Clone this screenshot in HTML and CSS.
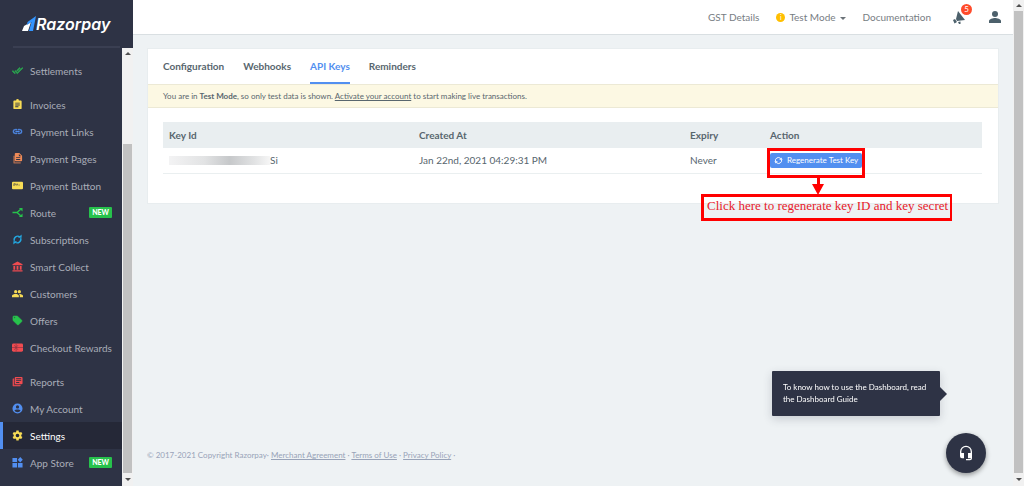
FILE: index.html
```html
<!DOCTYPE html>
<html lang="en">
<head>
<meta charset="utf-8">
<title>Razorpay Dashboard - API Keys</title>
<meta name="viewport" content="width=device-width, initial-scale=1">
<link rel="stylesheet" href="styles.css">
</head>
<body>
<div class="app">
  <aside class="sidebar">
    <a class="brand" href="#">
      <svg class="brand-mark" viewBox="0 0 14 16" aria-hidden="true"><path fill="#fff" d="M2 10 9 6 6 15H0z"/><path fill="#3395ff" d="M14 0 5.500 6 5 9l4.500-3L7 15h4z"/></svg>
      <span>Razorpay</span>
    </a>
    <div class="sidebar-body">
      <nav class="menu">
        <div class="menu-group">
          <a class="item" href="#"><svg class="icon green-dark" viewBox="0 0 24 24"><path d="M18 7l-1.4-1.4-6.4 6.3 1.500 1.500L18 7zm4.200-1.400L11.700 16.200 7.500 12l-1.400 1.400 5.600 5.600 12-12-1.500-1.400zM.4 13.400 6 19l1.400-1.400L1.800 12 .4 13.400z" stroke="currentColor" stroke-width="1.500"/></svg><span>Settlements</span></a>
        </div>
        <div class="menu-group">
          <a class="item" href="#"><svg class="icon yellow" viewBox="0 0 24 24"><path fill-rule="evenodd" d="M19 3h-4a3 3 0 0 0-6 0H5a2 2 0 0 0-2 2v15a2 2 0 0 0 2 2h14a2 2 0 0 0 2-2V5a2 2 0 0 0-2-2zM7 8h10v2H7zm0 4h10v2H7zm0 4h7v2H7z"/></svg><span>Invoices</span></a>
          <a class="item" href="#"><svg class="icon blue" viewBox="0 0 24 24"><path d="M3.900 12c0-1.700 1.400-3.100 3.100-3.100h4V7H7a5 5 0 0 0 0 10h4v-1.900H7A3.100 3.100 0 0 1 3.900 12zM8 13h8v-2H8zm9-6h-4v1.900h4a3.100 3.100 0 0 1 0 6.200h-4V17h4a5 5 0 0 0 0-10z" stroke="currentColor"/></svg><span>Payment Links</span></a>
          <a class="item" href="#"><svg class="icon orange" viewBox="0 0 24 24"><path opacity=".65" d="M3 6h3v14h13v3H5a2 2 0 0 1-2-2z"/><path fill-rule="evenodd" d="M8 0h8l6 6v10a2 2 0 0 1-2 2H8a2 2 0 0 1-2-2V2a2 2 0 0 1 2-2zm7 2v5h5zM9 9v2h9V9zm0 4v2h9v-2z"/></svg><span>Payment Pages</span></a>
          <a class="item" href="#"><svg class="icon yellow" viewBox="0 0 24 24"><rect y="4" width="24" height="16" rx="2"/><path d="M4 13V8h3v3H4m5 0V8m0 3h3V8m2 3h3" fill="none" stroke="#5d5a4a" stroke-width="1.500"/></svg><span>Payment Button</span></a>
          <a class="item" href="#"><svg class="icon green" viewBox="0 0 24 24"><path d="M1 12h10l8-7M11 12l8 7" fill="none" stroke="currentColor" stroke-width="3"/><path d="M15 2h8v8zM15 22h8v-8z"/></svg><span>Route</span><b class="new">NEW</b></a>
          <a class="item" href="#"><svg class="icon cyan" viewBox="0 0 24 24"><path d="M5 15a8 8 0 0 1 12-9M19 9a8 8 0 0 1-12 9" fill="none" stroke="currentColor" stroke-width="3"/><path d="M13 8h8V1zM11 16H3v7z"/></svg><span>Subscriptions</span></a>
          <a class="item" href="#"><svg class="icon red" viewBox="0 0 24 24"><path d="M12 1 1 7v2h22V7zM3 11h4v8H3zm7 0h4v8h-4zm7 0h4v8h-4zM1 20h22v3H1z"/></svg><span>Smart Collect</span></a>
          <a class="item" href="#"><svg class="icon yellow" viewBox="0 0 24 24"><circle cx="8" cy="8" r="3.500"/><circle cx="16" cy="8" r="3.500"/><path d="M0 20v-3c0-3 5-4 8-4s7 1 7 4v3zM17 20v-3c0-2-1-3-2-4 4 0 9 1 9 4v3z"/></svg><span>Customers</span></a>
          <a class="item" href="#"><svg class="icon green" viewBox="0 0 24 24"><path fill-rule="evenodd" d="M21.400 11.600l-9-9A2 2 0 0 0 11 2H4a2 2 0 0 0-2 2v7c0 .6.200 1 .6 1.400l9 9a2 2 0 0 0 2.800 0l7-7a2 2 0 0 0 0-2.800zM5.500 7a1.500 1.500 0 1 1 0-3 1.500 1.500 0 0 1 0 3z" stroke="currentColor" stroke-width="1"/></svg><span>Offers</span></a>
          <a class="item" href="#"><svg class="icon red" viewBox="0 0 24 24"><rect y="3" width="24" height="18" rx="3"/><path d="M0 12h24M9 3v18M5 7l8 10M13 7 5 17" stroke="#8f3442" stroke-width="1.500"/></svg><span>Checkout Rewards</span></a>
        </div>
        <div class="menu-group">
          <a class="item" href="#"><svg class="icon red" viewBox="0 0 24 24"><path d="M2 6v16h16v-2H4V6z" stroke="currentColor"/><path fill-rule="evenodd" d="M8 2h13a2 2 0 0 1 2 2v12a2 2 0 0 1-2 2H8a2 2 0 0 1-2-2V4a2 2 0 0 1 2-2zm1 3v2h11V5zm0 4v2h11V9zm0 4v2h7v-2z"/></svg><span>Reports</span></a>
          <a class="item" href="#"><svg class="icon blue" viewBox="0 0 24 24"><path fill-rule="evenodd" d="M12 1a11 11 0 1 0 0 22 11 11 0 0 0 0-22zm0 4a3.500 3.500 0 1 1 0 7 3.500 3.500 0 0 1 0-7zm0 15c-3 0-5-1-6.500-3.500C6 14.500 10 14 12 14s6 .5 6.500 2.500C17 19 15 20 12 20z"/></svg><span>My Account</span></a>
          <a class="item active" href="#" aria-current="page"><svg class="icon yellow" viewBox="0 0 24 24"><path fill-rule="evenodd" d="M9.500 1h5l.5 3.200 2 1.200 3.200-1.200 2.500 4.300-2.500 2v3l2.500 2-2.500 4.300-3.200-1.200-2 1.200-.5 3.200h-5L9 19.800l-2-1.200-3.200 1.200-2.500-4.300 2.500-2v-3l-2.500-2 2.500-4.300L7 5.400l2-1.200zM12 8a4 4 0 1 0 0 8 4 4 0 0 0 0-8z"/></svg><span>Settings</span></a>
          <a class="item" href="#"><svg class="icon blue" viewBox="0 0 24 24"><path d="M1 2h10v9H1zM1 13h10v10H1zM13 13h10v10H13zM18 0l5.500 6L18 12l-5.500-6z"/></svg><span>App Store</span><b class="new">NEW</b></a>
        </div>
      </nav>
      <div class="scroll" aria-hidden="true"><i class="arrow up"></i><i class="thumb menu-thumb"></i><i class="arrow down"></i></div>
    </div>
  </aside>

  <div class="main">
    <header class="topbar">
      <a href="#">GST Details</a>
      <button class="mode" type="button"><i class="info">i</i>Test Mode<i class="caret"></i></button>
      <a href="#">Documentation</a>
      <button class="bell" type="button" aria-label="Announcements">
        <svg viewBox="0 0 14 14"><path d="M6 1 13 10 5 11 4 9zM1 10l2-1 2 3-2.500 1.500zM6 12l2.500-.5V14H7z"/></svg>
        <span class="count">5</span>
      </button>
      <button class="user" type="button" aria-label="Account"><svg viewBox="0 0 12 12"><circle cx="6" cy="3" r="3"/><path d="M0 12v-2c0-2 4-3 6-3s6 1 6 3v2z"/></svg></button>
    </header>

    <main class="content">
      <section class="card">
        <nav class="tabs">
          <a href="#">Configuration</a>
          <a href="#">Webhooks</a>
          <a class="current" href="#" aria-current="page">API Keys</a>
          <a href="#">Reminders</a>
        </nav>
        <p class="notice">You are in <b>Test Mode</b>, so only test data is shown. <a href="#">Activate your account</a> to start making live transactions.</p>
        <div class="table-wrap">
          <table class="keys">
            <thead><tr><th class="col-key">Key Id</th><th class="col-date">Created At</th><th class="col-expiry">Expiry</th><th>Action</th></tr></thead>
            <tbody>
              <tr>
                <td><span class="key"><i class="redacted"></i>Si</span></td>
                <td>Jan 22nd, 2021 04:29:31 PM</td>
                <td>Never</td>
                <td>
                  <div class="action">
                    <button class="regenerate" type="button"><svg viewBox="0 0 24 24"><path d="M4 14a8 8 0 0 1 13-8M20 10a8 8 0 0 1-13 8" fill="none" stroke="#fff" stroke-width="2.500"/><path fill="#fff" d="M14 10h9l-4-6zM10 14H1l4 6z"/></svg>Regenerate Test Key</button>
                    <div class="highlight"></div>
                    <svg class="pointer" viewBox="0 0 12 18" aria-hidden="true"><path fill="#f00" d="M5 0h3v7h4L6 18 0 7h5z"/></svg>
                    <div class="callout">Click here to regenerate key ID and key secret</div>
                  </div>
                </td>
              </tr>
            </tbody>
          </table>
        </div>
      </section>
      <footer class="footer">© 2017-2021 Copyright Razorpay· <a href="#">Merchant Agreement</a> · <a href="#">Terms of Use</a> · <a href="#">Privacy Policy</a> ·</footer>
    </main>
  </div>
  <div class="scroll" aria-hidden="true"><i class="arrow up"></i><i class="thumb page-thumb"></i><i class="arrow down"></i></div>
</div>

<div class="guide">To know how to use the Dashboard, read the Dashboard Guide</div>
<button class="support" type="button" aria-label="Support"><svg viewBox="0 0 24 24"><path d="M12 1a9 9 0 0 0-9 9v7a3 3 0 0 0 3 3h3v-8H5v-2a7 7 0 0 1 14 0v2h-4v8h4v1h-7v2h6a3 3 0 0 0 3-3V10a9 9 0 0 0-9-9z"/></svg></button>
</body>
</html>
```

FILE: styles.css
```css
* { box-sizing: border-box; }

body {
  margin: 0;
  font: 10px/16px Lato, "Open Sans", sans-serif;
  color: #58666e;
  background: #eef2f4;
}

a { color: inherit; text-decoration: none; }

button {
  margin: 0;
  padding: 0;
  border: 0;
  background: none;
  color: inherit;
  font: inherit;
  cursor: pointer;
}

svg { display: block; flex: none; fill: currentColor; }

.app { display: flex; height: 100vh; }

/* Sidebar */
.sidebar {
  display: flex;
  flex-direction: column;
  width: 133px;
  flex: none;
  background: #2e3345;
}

.brand {
  display: flex;
  align-items: center;
  height: 48px;
  flex: none;
  margin: 0 13px;
  padding: 2px 0 0 9px;
  border-bottom: 2px solid #3a3f52;
  color: #fff;
  font: italic 600 16px/24px Inter, Lato, sans-serif;
}

.brand-mark { width: 14px; height: 16px; }

.sidebar-body { display: flex; flex: 1; min-height: 0; }

.menu { flex: 1; padding-top: 9px; overflow: hidden; }

.menu-group { margin-bottom: 7px; }

.item {
  display: flex;
  align-items: center;
  gap: 7px;
  height: 27px;
  padding: 0 10px 0 9px;
  border-left: 3px solid transparent;
  color: #a9adb8;
  white-space: nowrap;
}

.item.active { background: #252837; border-left-color: #528ff0; color: #fff; }

.icon { width: 11px; height: 11px; }
.yellow { color: #f7dc56; }
.green { color: #27c24c; }
.green-dark { color: #2aa84f; }
.blue { color: #528ff0; }
.cyan { color: #23a7e0; }
.orange { color: #ee8a57; }
.red { color: #f04b50; }

.new {
  margin-left: auto;
  padding: 0 3px;
  border-radius: 1px;
  background: #27c24c;
  color: #fff;
  font-size: 7px;
  font-weight: 900;
  line-height: 11px;
}

/* Scrollbars */
.scroll {
  display: flex;
  flex-direction: column;
  align-items: center;
  width: 11px;
  flex: none;
  background: #f1f1f1;
}

.arrow { border: 3px solid transparent; }
.up { margin: 1px 0 4px; border-bottom-color: #505050; }
.down { margin: 5px 0 2px; border-top-color: #505050; }
.thumb { flex: 1; width: 9px; background: #c1c1c1; }
.menu-thumb { margin-top: 85px; }

/* Top bar */
.main { display: flex; flex: 1; flex-direction: column; min-width: 0; }

.topbar {
  display: flex;
  align-items: center;
  justify-content: flex-end;
  height: 35px;
  flex: none;
  padding-right: 12px;
  border-bottom: 1px solid #d9dfe2;
  background: #fff;
  color: #777d83;
}

.mode { display: flex; align-items: center; margin: 0 17px; }

.info {
  width: 9px;
  height: 9px;
  margin-right: 4px;
  border-radius: 50%;
  background: #ffbf00;
  color: #fff;
  font-size: 7px;
  font-style: normal;
  line-height: 9px;
}

.caret {
  margin: 2px 0 0 4px;
  border: 3px solid transparent;
  border-top-color: #6b7278;
  border-bottom: 0;
}

.bell { position: relative; margin: 0 23px 0 21px; color: #4c606b; }
.bell svg { width: 14px; height: 14px; }

.count {
  position: absolute;
  top: -6px;
  right: -6px;
  width: 11px;
  border-radius: 50%;
  background: #ff4b2b;
  color: #fff;
  font-size: 8px;
  line-height: 11px;
}

.user { color: #4c606b; }
.user svg { width: 12px; height: 12px; }

/* Content */
.content { display: flex; flex: 1; flex-direction: column; padding: 13px 14px 23px; }

.card { padding-bottom: 29px; border: 1px solid #e8edef; background: #fff; }

.tabs { display: flex; gap: 19px; padding: 0 15px; font-weight: 700; }
.tabs a { padding: 9px 0 8px; border-bottom: 2px solid transparent; }
.tabs .current { color: #528ff0; border-color: #528ff0; }

.notice {
  margin: 0;
  padding: 3px 15px;
  border: solid #ece9d5;
  border-width: 1px 0;
  background: #fcf8e3;
  font-size: 8px;
  line-height: 16px;
}

.notice a, .footer a { text-decoration: underline; }

.table-wrap { padding: 14px 16px 0 15px; }

.keys { width: 100%; border-collapse: collapse; table-layout: fixed; }
.keys th { padding: 5px 6px; background: #e9eef0; font-weight: 700; text-align: left; }
.keys td { padding: 4px 6px 5px; border-bottom: 1px solid #eaeff0; }
.col-key { width: 250px; }
.col-date { width: 271px; }
.col-expiry { width: 80px; }

.key { display: flex; align-items: center; }

.redacted {
  width: 101px;
  height: 9px;
  background: linear-gradient(90deg, #f3f3f4, #e2e3e4 35%, #c6c8ca 60%, #e2e3e4 85%, #f6f6f6);
}

.action { position: relative; }

.regenerate {
  display: flex;
  align-items: center;
  gap: 4px;
  height: 15px;
  padding: 0 4px;
  border-radius: 2px;
  background: #528ff0;
  color: #fff;
  font-size: 8px;
  white-space: nowrap;
}

.regenerate svg { width: 9px; height: 9px; }

/* Annotation laid over the table */
.highlight {
  position: absolute;
  top: -5px;
  left: -3px;
  width: 98px;
  height: 30px;
  border: 3px solid #f00;
}

.pointer { position: absolute; top: 24px; left: 42px; width: 12px; height: 18px; }

.callout {
  position: absolute;
  top: 41px;
  left: -69px;
  padding: 1px 2px 4px 3px;
  border: 3px solid #f00;
  border-width: 3px 2px 3px 3px;
  color: #e8202a;
  font: 13px/16px "Liberation Serif", serif;
  white-space: nowrap;
}

.footer { margin-top: auto; color: #98a3b8; font-size: 8px; }

/* Floating help */
.guide {
  position: fixed;
  right: 84px;
  bottom: 70px;
  width: 168px;
  padding: 10px 10px 11px 11px;
  border-radius: 1px;
  background: #2e3345;
  box-shadow: 0 3px 10px rgba(46, 51, 69, 0.2);
  color: #fff;
  font-size: 8px;
  line-height: 12px;
}

.guide::after {
  content: "";
  position: absolute;
  top: 16px;
  left: 100%;
  border: 7px solid transparent;
  border-left-color: #2e3345;
  border-right: 0;
}

.support {
  position: fixed;
  right: 38px;
  bottom: 13px;
  display: grid;
  place-items: center;
  width: 40px;
  height: 40px;
  border-radius: 50%;
  background: #2e3345;
  box-shadow: 0 2px 5px rgba(0, 0, 0, 0.4);
  color: #fff;
}

.support svg { width: 16px; height: 16px; }
```
